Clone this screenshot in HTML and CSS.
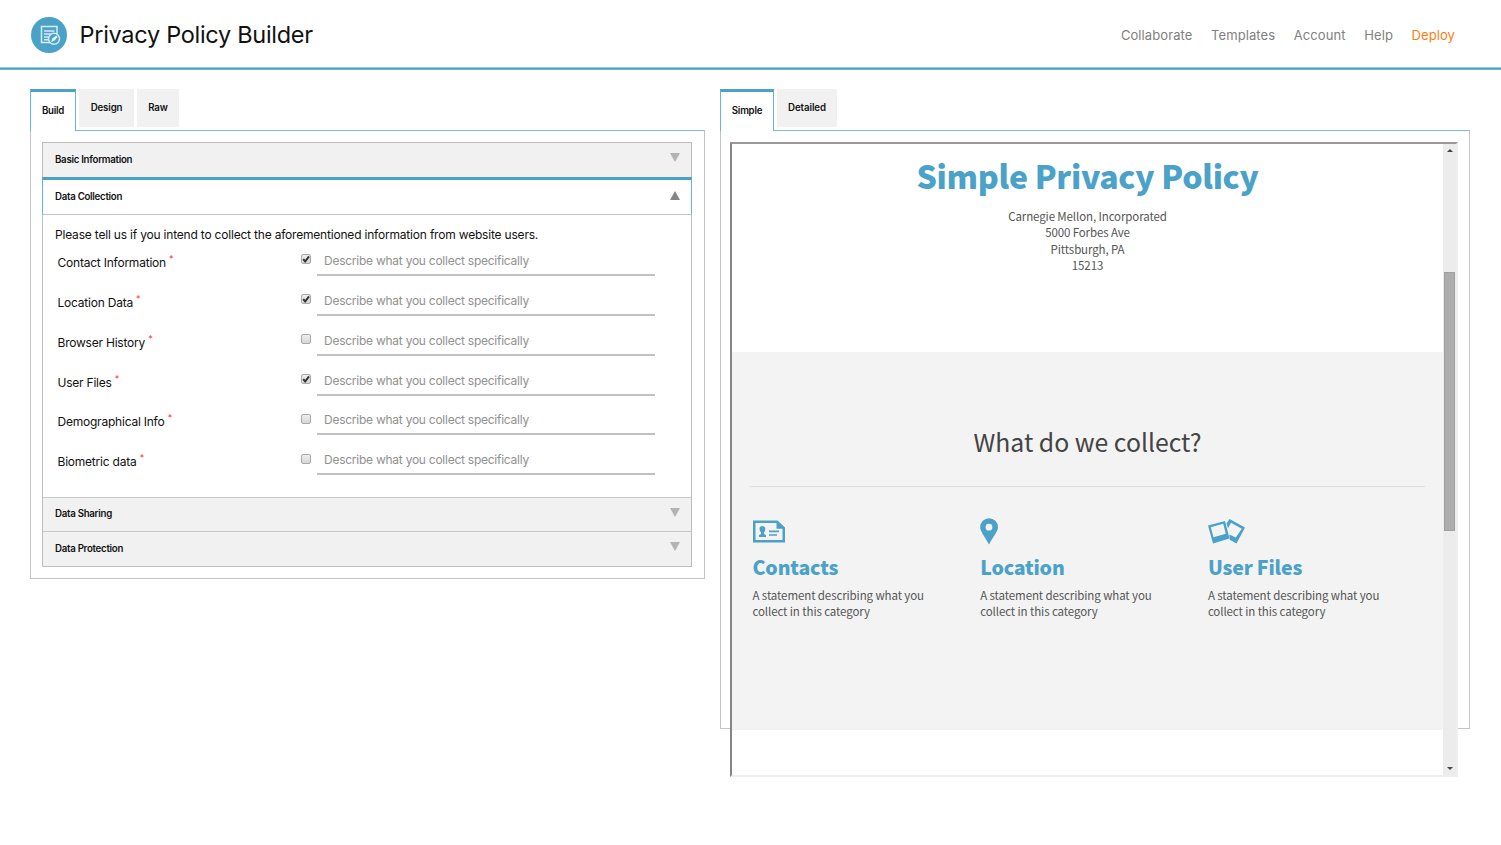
FILE: index.html
```html
<!DOCTYPE html>
<html lang="en">
<head>
<meta charset="utf-8">
<title>Privacy Policy Builder</title>
<link rel="stylesheet" href="styles.css">
</head>
<body>
<header class="header">
  <svg class="logo" viewBox="0 0 36 36"><circle cx="18" cy="18" r="18" fill="#4ba2c8"/><g fill="none" stroke="#d5eaf3" stroke-width="1.500"><path d="M20 25.500H10.500V9.500H26V17"/><path d="M13 14H23.500M13 17H22M13 20H19M13 22.800H17.500"/><circle cx="23" cy="21.800" r="5.500" fill="#4ba2c8"/></g><path d="M20 25L21.600 21.300L25.300 18.600L26.500 20L23.700 23.400Z" fill="#e6f3f8"/></svg>
  <h1 class="title">Privacy Policy Builder</h1>
  <nav class="nav"><a>Collaborate</a><a>Templates</a><a>Account</a><a>Help</a><a class="deploy">Deploy</a></nav>
</header>
<main class="main">
  <section class="builder">
    <div class="tabs"><div class="tab active build">Build</div><div class="tab design">Design</div><div class="tab raw">Raw</div></div>
    <div class="panel">
      <div class="accordion">
        <div class="bar first"><span>Basic Information</span><i class="down"></i></div>
        <div class="bar open"><span>Data Collection</span><i class="up"></i></div>
        <div class="content">
          <p class="intro">Please tell us if you intend to collect the aforementioned information from website users.</p>
          <div class="row"><label>Contact Information <sup>*</sup></label><span class="check"><svg viewBox="0 0 10 10"><path d="M2.200 5.200L4.200 7.500L8 2.300"/></svg></span><span class="field">Describe what you collect specifically</span></div>
          <div class="row"><label>Location Data <sup>*</sup></label><span class="check"><svg viewBox="0 0 10 10"><path d="M2.200 5.200L4.200 7.500L8 2.300"/></svg></span><span class="field">Describe what you collect specifically</span></div>
          <div class="row"><label>Browser History <sup>*</sup></label><span class="check"></span><span class="field">Describe what you collect specifically</span></div>
          <div class="row"><label>User Files <sup>*</sup></label><span class="check"><svg viewBox="0 0 10 10"><path d="M2.200 5.200L4.200 7.500L8 2.300"/></svg></span><span class="field">Describe what you collect specifically</span></div>
          <div class="row"><label>Demographical Info <sup>*</sup></label><span class="check"></span><span class="field">Describe what you collect specifically</span></div>
          <div class="row"><label>Biometric data <sup>*</sup></label><span class="check"></span><span class="field">Describe what you collect specifically</span></div>
        </div>
        <div class="bar sharing"><span>Data Sharing</span><i class="down"></i></div>
        <div class="bar last"><span>Data Protection</span><i class="down"></i></div>
      </div>
    </div>
  </section>
  <section class="preview">
    <div class="tabs"><div class="tab active simple">Simple</div><div class="tab detailed">Detailed</div></div>
    <div class="panel preview-panel">
      <div class="frame">
        <div class="page">
          <div class="intro-block">
            <h2>Simple Privacy Policy</h2>
            <address>Carnegie Mellon, Incorporated<br>5000 Forbes Ave<br>Pittsburgh, PA<br>15213</address>
          </div>
          <div class="collect">
            <h3>What do we collect?</h3>
            <div class="cards">
              <article><svg width="33" height="27" viewBox="0 0 33 27"><path fill="#4ba2c8" fill-rule="evenodd" d="M0 2.500H24.500L32 9.500V24.500H0ZM2.500 5V22H29.500V10.800H23.500V5Z"/><path fill="#4ba2c8" d="M6.500 10.500Q6.500 8 9.300 8T12.300 10.500Q12.400 13 11 14.500V16L13 17V19H6V17L8 16V14.500Q6.500 13 6.500 10.500ZM16 12.500H26V14.200H16ZM16 16.200H24V17.800H16Z"/></svg><h4>Contacts</h4><p>A statement describing what you<br>collect in this category</p></article>
              <article><svg width="18" height="27" viewBox="0 0 18 27"><path fill="#4ba2c8" fill-rule="evenodd" d="M9 .200A8.900 8.900 0 0 1 18 9.100C18 13.500 14 17.500 9 26.500C4 17.500 .200 13.500 .200 9.100A8.900 8.900 0 0 1 9 .200ZM9 5.800A3.400 3.400 0 1 0 9 12.600A3.400 3.400 0 1 0 9 5.800Z"/></svg><h4>Location</h4><p>A statement describing what you<br>collect in this category</p></article>
              <article><svg width="37" height="27" viewBox="0 0 37 27"><path fill="#4ba2c8" fill-rule="evenodd" d="M0 7.500L17 3L21.500 20.500L5 25.500ZM2.800 9.200L5.500 19.200L17.800 15.800L15.200 5.800ZM18.500 5.500L21.500 1L37 9.500L28.500 25.500L21.800 21.800L21.300 16.500L27.800 19.600L33.800 10.700L23 4.700L20 10.300Z"/></svg><h4>User Files</h4><p>A statement describing what you<br>collect in this category</p></article>
            </div>
          </div>
        </div>
        <div class="scrollbar"><i class="arrow arrow-up"></i><div class="thumb"></div><i class="arrow arrow-down"></i></div>
      </div>
    </div>
  </section>
</main>
</body>
</html>
```
FILE: styles.css
```css
* { box-sizing: border-box; }
body { margin: 0; height: 845px; overflow: hidden; background: #fff; color: #111; font-family: Inter, "Liberation Sans", sans-serif; white-space: nowrap; }
h1, h2, h3, h4, p { margin: 0; }
.header { height: 70px; padding: 0 46px 0 31px; display: flex; align-items: center; background: linear-gradient(#9ccce0 0 1px, #459fc6 1px 2px, #74b7d4 2px) bottom / 100% 3px no-repeat; }
.logo { width: 36px; height: 36px; }
.title { margin-left: 12.500px; margin-top: -2px; font-size: 23.5px; font-weight: 400; letter-spacing: -.29px; }
.nav { margin-left: auto; display: flex; gap: 18.600px; color: #808080; font-size: 13px; letter-spacing: .09px; }
.deploy { color: #ff7a14; }
.main { display: flex; padding: 19px 31px 0 30px; gap: 15px; }
.builder { width: 675px; }
.preview { width: 750px; }
.tabs { display: flex; gap: 3px; height: 42px; margin-bottom: -1px; }
.tab { height: 38px; padding-top: 12px; background: #f1f1f1; text-align: center; font-size: 9.700px; font-weight: 600; line-height: 14px; letter-spacing: -.15px; }
.tab.active { position: relative; height: 42px; padding-top: 12px; background: #fff; border: 1px solid #67b5d5; border-top: 3px solid #4ba2c8; border-bottom: 0; letter-spacing: -.25px; }
.build { width: 46px; }
.design { width: 55px; }
.raw { width: 42px; }
.simple { width: 54px; }
.detailed { width: 60px; letter-spacing: -.1px; }
.panel { border: 1px solid #c4c4c4; border-top-color: #78bdd9; height: 449px; padding: 11px 12px 11px 11px; }
.preview-panel { height: 599px; padding: 11px 9px; }
.accordion { border: 1px solid #bdbdbd; height: 425px; }
.bar { height: 35px; padding: 0 11px 0 12px; display: flex; align-items: center; justify-content: space-between; background: #f1f1f1; border-top: 1px solid #c8c8c8; font-size: 9.700px; font-weight: 600; letter-spacing: -.28px; }
.bar span { padding-bottom: 1px; }
.bar.first { height: 34px; border-top: 0; }
.bar.open { height: 38px; margin: 0 -1px; background: #fff; border: 1px solid #67b5d5; border-top: 3px solid #4ba2c8; border-bottom: 1px solid #c4c4c4; }
.bar.sharing { height: 34px; }
.bar.sharing span, .bar.last span { padding-bottom: 2px; }
.bar.last { height: 35px; }
.down { border: 5px solid transparent; border-top: 9px solid #b3b3b3; border-bottom: 0; margin-top: -5px; }
.up { border: 5px solid transparent; border-bottom: 9px solid #858585; border-top: 0; margin-top: -3px; }
.content { height: 282px; padding-top: 11px; }
.intro { margin-left: 12px; height: 18px; font-size: 12px; line-height: 18px; letter-spacing: -.195px; }
.row { height: 39.850px; display: grid; grid-template-columns: 243px 16.500px 337.500px; padding-left: 14.500px; font-size: 12px; letter-spacing: -.22px; }
.row label { line-height: 20px; padding-top: 9px; }
sup { color: #f33; font-size: 9px; line-height: 0; vertical-align: 5px; }
.check { width: 10px; height: 10px; margin-top: 10.400px; border: 1px solid #aaa; border-radius: 2px; background: linear-gradient(#eee, #d5d5d5); display: flex; }
.check svg { width: 10px; height: 10px; margin: -1px; fill: none; stroke: #333; stroke-width: 2; }
.field { height: 32px; padding: 7px 0 0 7px; line-height: 20px; color: #919191; border-bottom: 2px solid #c1c1c1; letter-spacing: -.25px; }
.frame { height: 635px; width: 728px; display: flex; border: 2px solid; border-color: #999 #eee #eee #858585; background: #fff; font-family: "Noto Sans CJK SC", sans-serif; color: #555; }
.page { width: 711px; }
.intro-block { height: 208px; padding-top: 9px; text-align: center; }
h2 { height: 48px; line-height: 45px; font-size: 32px; font-weight: 900; color: #4ba2c8; letter-spacing: -.3px; }
address { padding-top: 7px; font-size: 11.500px; line-height: 16.400px; font-style: normal; letter-spacing: -.11px; }
.collect { height: 378px; padding: 68px 18px 0; background: #f3f3f3; }
h3 { height: 67px; padding-top: 2px; text-align: center; line-height: 39px; font-size: 24.800px; font-weight: 400; color: #444; border-bottom: 1px solid #dedede; }
.cards { display: grid; grid-template-columns: repeat(3, 227.700px); padding: 31px 0 0 2.500px; }
article svg { display: block; }
h4 { height: 35px; line-height: 34px; margin-top: 5px; color: #4ba2c8; font-size: 19.500px; font-weight: 900; letter-spacing: -.15px; }
article p { margin-top: 1.500px; font-size: 11.500px; line-height: 16.400px; letter-spacing: -.1px; }
.scrollbar { width: 14px; margin-left: auto; display: flex; flex-direction: column; align-items: center; background: #ececec; }
.thumb { width: 11px; height: 259px; margin-top: 120px; margin-right: 1px; background: #adadad; border: 1px solid #a0a0a0; }
.arrow { border: 3px solid transparent; }
.arrow-up { margin-top: 5px; border-top: 0; border-bottom-color: #444; }
.arrow-down { margin-top: auto; margin-bottom: 5px; border-bottom: 0; border-top-color: #444; }
```
